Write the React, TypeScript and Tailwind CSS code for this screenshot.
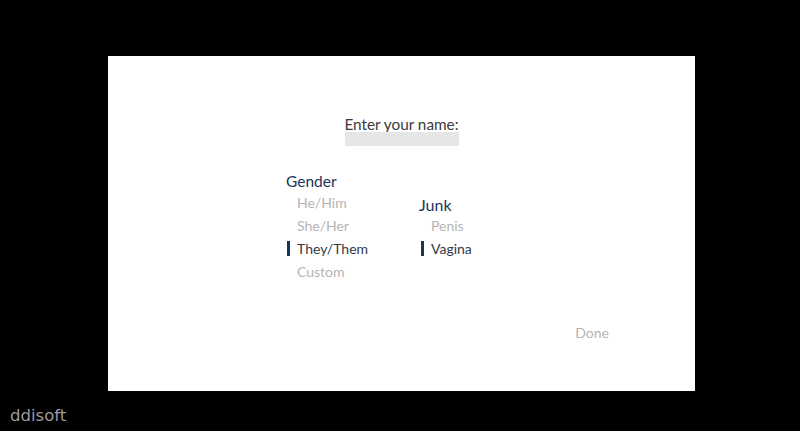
import React from 'react';

interface OptionProps {
  label: string;
  selected?: boolean;
  barOffset: string;
  indent: string;
}

const Option: React.FC<OptionProps> = ({ label, selected, barOffset, indent }) => (
  <div className="flex h-[23px] items-center text-[14px]">
    <div className={`${indent} flex h-full items-center`}>
      {selected && <div className={`${barOffset} h-[15px] w-[3px] bg-[#1b355a]`} />}
    </div>
    <span className={selected ? 'text-[#33394a]' : 'text-[#b4b4b4]'}>{label}</span>
  </div>
);

const App: React.FC = () => {
  const genders = ['He/Him', 'She/Her', 'They/Them', 'Custom'];
  const junk = ['Penis', 'Vagina'];

  return (
    <div className="relative h-[431px] w-[800px] overflow-hidden bg-black pt-[56px] pl-[108px] font-['Lato',sans-serif] text-[15px]">
      <div className="flex h-[335px] w-[587px] flex-col bg-white">
        <div className="mt-[60px] flex flex-col items-center">
          <div className="h-[16px] text-[15.3px] leading-[16px] text-[#3a3a3a]">Enter your name:</div>
          <div className="h-[14px] w-[114px] bg-[#e6e6e6]" />
        </div>

        <div className="mt-[26px] ml-[178px] flex">
          <div className="w-[133px]">
            <div className="h-[19px] text-[15.5px] leading-[19px] text-[#1b355a]">Gender</div>
            {genders.map((g) => (
              <Option key={g} label={g} selected={g === 'They/Them'} barOffset="ml-[1px]" indent="w-[11px]" />
            ))}
          </div>
          <div className="mt-[23px]">
            <div className="h-[19px] text-[16px] leading-[19px] text-[#1b355a]">Junk</div>
            {junk.map((j) => (
              <Option key={j} label={j} selected={j === 'Vagina'} barOffset="ml-[2px]" indent="w-[12px]" />
            ))}
          </div>
        </div>

        <div className="mt-[40px] flex justify-end pr-[86px]">
          <span className="h-[20px] text-[14px] leading-[20px] text-[#b4b4b4]">Done</span>
        </div>
      </div>

      <div className="absolute bottom-[5px] left-[10px] font-['DejaVu_Sans',sans-serif] text-[16.5px] leading-[20px] text-[#9c9c9c]">
        ddisoft
      </div>
    </div>
  );
};

export default App;
